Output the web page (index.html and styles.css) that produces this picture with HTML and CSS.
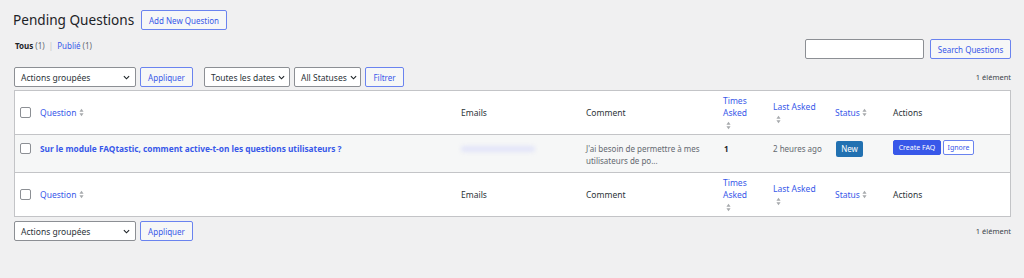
FILE: index.html
```html
<!DOCTYPE html>
<html lang="fr">
<head>
<meta charset="utf-8">
<title>Pending Questions</title>
<link rel="stylesheet" href="styles.css">
</head>
<body>
<div class="wrap">
  <div class="head">
    <h1 class="title">Pending Questions</h1>
    <a class="btn btn-add">Add New Question</a>
  </div>

  <div class="topbar">
    <ul class="subsub">
      <li class="current">Tous <span class="count">(1)</span></li>
      <li class="sep">|</li>
      <li><a>Publié</a> <span class="count">(1)</span></li>
    </ul>
    <div class="search">
      <input class="search-input" type="text">
      <a class="btn btn-search">Search Questions</a>
    </div>
  </div>

  <div class="tablenav">
    <div class="actions">
      <div class="select sel-bulk"><span>Actions groupées</span><svg class="chev" viewBox="0 0 8 5"><path d="M1 1l3 3 3-3"/></svg></div>
      <a class="btn btn-apply">Appliquer</a>
      <div class="select sel-dates"><span>Toutes les dates</span><svg class="chev" viewBox="0 0 8 5"><path d="M1 1l3 3 3-3"/></svg></div>
      <div class="select sel-status"><span>All Statuses</span><svg class="chev" viewBox="0 0 8 5"><path d="M1 1l3 3 3-3"/></svg></div>
      <a class="btn btn-filter">Filtrer</a>
    </div>
    <div class="count-items">1 élément</div>
  </div>

  <table class="list">
    <colgroup>
      <col class="c-cb"><col class="c-q"><col class="c-em"><col class="c-cm"><col class="c-ta"><col class="c-la"><col class="c-st"><col class="c-ac">
    </colgroup>
    <thead>
      <tr>
        <th class="cb"><span class="box"></span></th>
        <th><a class="sort">Question <svg class="arr" viewBox="0 0 6 10"><path d="M3 0.5L5.5 4H0.5z"/><path d="M3 9.5L0.5 6h5z"/></svg></a></th>
        <th>Emails</th>
        <th>Comment</th>
        <th><a class="sort">Times Asked <svg class="arr blk" viewBox="0 0 6 10"><path d="M3 0.5L5.5 4H0.5z"/><path d="M3 9.5L0.5 6h5z"/></svg></a></th>
        <th><a class="sort">Last Asked <svg class="arr blk" viewBox="0 0 6 10"><path d="M3 0.5L5.5 4H0.5z"/><path d="M3 9.5L0.5 6h5z"/></svg></a></th>
        <th><a class="sort">Status <svg class="arr" viewBox="0 0 6 10"><path d="M3 0.5L5.5 4H0.5z"/><path d="M3 9.5L0.5 6h5z"/></svg></a></th>
        <th>Actions</th>
      </tr>
    </thead>
    <tbody>
      <tr class="row">
        <td class="cb"><span class="box"></span></td>
        <td><a class="q-title">Sur le module FAQtastic, comment active-t-on les questions utilisateurs ?</a></td>
        <td><span class="email-blur"></span></td>
        <td class="comment">J'ai besoin de permettre à mes utilisateurs de po...</td>
        <td class="num">1</td>
        <td class="ago">2 heures ago</td>
        <td class="st"><span class="badge">New</span></td>
        <td class="acts"><a class="btn-primary">Create FAQ</a><a class="btn-ignore">Ignore</a></td>
      </tr>
    </tbody>
    <tfoot>
      <tr>
        <th class="cb"><span class="box"></span></th>
        <th><a class="sort">Question <svg class="arr" viewBox="0 0 6 10"><path d="M3 0.5L5.5 4H0.5z"/><path d="M3 9.5L0.5 6h5z"/></svg></a></th>
        <th>Emails</th>
        <th>Comment</th>
        <th><a class="sort">Times Asked <svg class="arr blk" viewBox="0 0 6 10"><path d="M3 0.5L5.5 4H0.5z"/><path d="M3 9.5L0.5 6h5z"/></svg></a></th>
        <th><a class="sort">Last Asked <svg class="arr blk" viewBox="0 0 6 10"><path d="M3 0.5L5.5 4H0.5z"/><path d="M3 9.5L0.5 6h5z"/></svg></a></th>
        <th><a class="sort">Status <svg class="arr" viewBox="0 0 6 10"><path d="M3 0.5L5.5 4H0.5z"/><path d="M3 9.5L0.5 6h5z"/></svg></a></th>
        <th>Actions</th>
      </tr>
    </tfoot>
  </table>

  <div class="tablenav bottom">
    <div class="actions">
      <div class="select sel-bulk"><span>Actions groupées</span><svg class="chev" viewBox="0 0 8 5"><path d="M1 1l3 3 3-3"/></svg></div>
      <a class="btn btn-apply">Appliquer</a>
    </div>
    <div class="count-items">1 élément</div>
  </div>
</div>
</body>
</html>
```

FILE: styles.css
```css
* { box-sizing: border-box; }
html, body { margin: 0; padding: 0; }
body {
  background: #f0f0f1;
  font-family: "Noto Sans", "Open Sans", sans-serif;
  font-size: 9px;
  color: #3c434a;
}
a { color: #3858e9; text-decoration: none; cursor: pointer; }

.wrap { padding: 10px 13px 0 14px; }

.head { display: flex; align-items: center; height: 20px; }
.title {
  margin: 0 0 0 -1px;
  font-size: 13.6px;
  font-weight: 400;
  color: #1d2327;
  line-height: 20px;
  width: 128px;
  white-space: nowrap;
}

.btn {
  display: inline-flex;
  align-items: center;
  justify-content: center;
  height: 20px;
  border: 1px solid #6a83ef;
  border-radius: 2px;
  background: #f6f7f7;
  color: #3858e9;
  font-size: 8px;
  white-space: nowrap;
}
.btn-add { width: 86px; }

.topbar { display: flex; justify-content: space-between; align-items: flex-start; margin-top: 9px; }
.subsub {
  list-style: none; margin: 0; padding: 1px 0 0 1px;
  display: flex; gap: 4px; font-size: 8px; line-height: 12px;
}
.subsub .current { color: #1d2327; font-weight: 700; }
.subsub .count { color: #646970; font-weight: 400; }
.subsub .sep { color: #c3c4c7; }

.search { display: flex; gap: 6px; }
.search-input {
  width: 119px; height: 20px; margin: 0;
  border: 1px solid #8c8f94; border-radius: 2px; background: #fff;
}
.btn-search { width: 81px; }

.tablenav { display: flex; justify-content: space-between; align-items: center; margin-top: 8px; height: 20px; }
.tablenav.bottom { margin-top: 4px; }
.actions { display: flex; align-items: center; }
.select {
  display: flex; align-items: center; justify-content: space-between;
  height: 20px; padding: 0 5px 0 6px;
  background: #fff; border: 1px solid #8c8f94; border-radius: 2px;
  color: #2c3338; font-size: 8.5px; white-space: nowrap;
}
.chev { width: 7px; height: 5px; fill: none; stroke: #1d2327; stroke-width: 1.3; flex: none; }
.sel-bulk { width: 122px; }
.btn-apply { width: 53px; margin-left: 4px; }
.sel-dates { width: 86px; margin-left: 11px; padding-right: 4px; }
.sel-status { width: 67px; margin-left: 4px; padding-right: 3px; }
.btn-filter { width: 39px; margin-left: 4px; }
.count-items { color: #3c434a; font-size: 7.5px; }

.list {
  width: 997px;
  margin-top: 3px;
  table-layout: fixed;
  border-collapse: separate;
  border-spacing: 0;
  background: #fff;
  border: 1px solid #c3c4c7;
}
.c-cb { width: 19px; }
.c-q { width: 421px; }
.c-em { width: 125px; }
.c-cm { width: 137px; }
.c-ta { width: 50px; }
.c-la { width: 62px; }
.c-st { width: 58px; }
.c-ac { width: 123px; }

th {
  text-align: left;
  font-weight: 400;
  color: #2c3338;
  font-size: 8.5px;
  line-height: 12px;
  padding: 0 6px;
  vertical-align: middle;
}
thead th { height: 44px; border-bottom: 1px solid #c3c4c7; }
tfoot th { height: 44px; border-top: 1px solid #c3c4c7; }
th.cb, td.cb { padding: 0 0 0 5px; }
.box {
  display: block; width: 11px; height: 11px;
  border: 1px solid #8c8f94; border-radius: 2px; background: #fff;
}
.sort { color: #3858e9; }
.arr { width: 5px; height: 9px; fill: #a7aaad; vertical-align: -1px; }
.arr.blk { display: block; margin: 2px 0 1px 3px; }

.row td {
  background: #f6f7f7;
  vertical-align: top;
  padding: 8px 6px 5px;
  line-height: 12px;
  font-size: 8px;
  color: #646970;
}
.row td.cb { padding-top: 8px; padding-left: 5px; }
.q-title { font-weight: 700; font-size: 8.3px; color: #3858e9; }
.email-blur {
  display: block; width: 74px; height: 6px; margin-top: 3px; margin-left: 0;
  background: #e2e4f8; border-radius: 3px; filter: blur(2px);
}
.row td.num { font-weight: 700; color: #1d2327; padding-left: 7px; }
.badge {
  display: inline-block; margin-top: -3px; margin-left: 1px;
  width: 27px; height: 16px; line-height: 16px; text-align: center;
  background: #2271b1; color: #fff; border-radius: 2px; font-size: 8px;
}
.acts { white-space: nowrap; }
.btn-primary, .btn-ignore {
  display: inline-block; height: 15px; line-height: 13px; margin-top: -3px;
  border: 1px solid #3858e9; border-radius: 2px; font-size: 7px; text-align: center;
  vertical-align: top;
}
.btn-primary { width: 48px; background: #3858e9; color: #fff; }
.btn-ignore { width: 31px; margin-left: 2px; background: #fff; color: #3858e9; border-color: #6a83ef; }
```
